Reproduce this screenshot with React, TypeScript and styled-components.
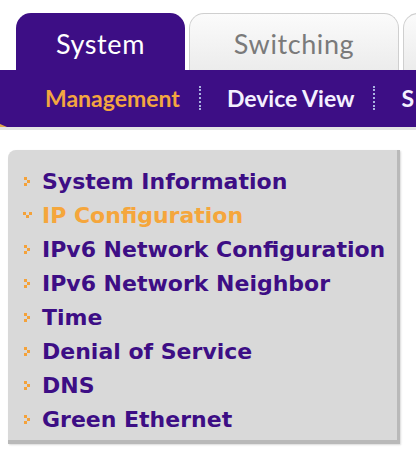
import { FC } from 'react';
import styled, { createGlobalStyle } from 'styled-components';

const Global = createGlobalStyle`
  html, body {
    margin: 0;
    padding: 0;
    background: #ffffff;
  }
`;

const Page = styled.div`
  width: 416px;
  height: 458px;
  overflow: hidden;
  background: #fff;
`;

const TabRow = styled.div`
  display: flex;
  gap: 4px;
  padding: 13px 0 0 16px;
  height: 57px;
  overflow: hidden;
`;

const Tab = styled.div<{ $active?: boolean; $w: number }>`
  flex: 0 0 ${p => p.$w}px;
  height: 57px;
  box-sizing: border-box;
  border-radius: 15px 15px 0 0;
  display: flex;
  justify-content: center;
  align-items: center;
  padding-top: 3px;
  font-family: "Lato", "DejaVu Sans", sans-serif;
  font-size: 27px;
  font-weight: 400;
  letter-spacing: 0.6px;
  color: ${p => (p.$active ? '#ffffff' : '#7a7a7a')};
  background: ${p => (p.$active ? '#3d0e85' : 'linear-gradient(#fbfbfb, #ececec)')};
  border: ${p => (p.$active ? 'none' : '1px solid #cfcfcf')};
  border-bottom: none;
`;

const Bar = styled.div`
  position: relative;
  height: 60px;
  background: #3d0e85;
  display: flex;
  align-items: center;
  padding-left: 45px;
  padding-bottom: 2px;
  box-sizing: border-box;
  white-space: nowrap;
  overflow: hidden;
  border-bottom: 3px solid #e4e4e4;
  &::after {
    content: '';
    position: absolute;
    left: 0;
    bottom: -3px;
    border-left: 7px solid #e0a84a;
    border-top: 3px solid transparent;
    border-bottom: 3px solid transparent;
  }
`;

const BarItem = styled.span<{ $active?: boolean }>`
  font-family: "Lato", "DejaVu Sans", sans-serif;
  font-size: 23px;
  font-weight: 700;
  color: ${p => (p.$active ? '#f3a640' : '#f4f0ff')};
`;

const Sep = styled.span`
  display: inline-block;
  width: 0;
  height: 24px;
  border-left: 2px dotted #a9b2e0;
  margin: 0 26px 0 19px;
`;

const Panel = styled.div`
  margin: 20px 0 0 8px;
  width: 392px;
  box-sizing: border-box;
  background: #d9d9d9;
  border-radius: 8px 0 0 0;
  padding: 14px 0 8px 15px;
  box-shadow: inset -3px -4px 0 #b9b9b9, 1px 1px 2px rgba(0, 0, 0, 0.15);
  display: flex;
  flex-direction: column;
`;

const Item = styled.div<{ $active?: boolean }>`
  display: flex;
  align-items: center;
  gap: 10px;
  height: 34px;
  font-family: "DejaVu Sans", Verdana, sans-serif;
  font-weight: 700;
  font-size: 22px;
  white-space: nowrap;
  color: ${p => (p.$active ? '#f5a63c' : '#3d0e85')};
`;

const Marker: FC<{ open?: boolean }> = ({ open }) => (
  <svg width="9" height="9" viewBox="0 0 9 9">
    {open ? (
      <g fill="#f4a23a">
        <rect x="0" y="1" width="3" height="3" />
        <rect x="6" y="1" width="3" height="3" />
        <rect x="3" y="4" width="3" height="3" />
      </g>
    ) : (
      <g fill="#f4a23a">
        <rect x="1" y="0" width="3" height="3" />
        <rect x="4" y="3" width="3" height="3" />
        <rect x="1" y="6" width="3" height="3" />
      </g>
    )}
  </svg>
);

const items = [
  'System Information',
  'IP Configuration',
  'IPv6 Network Configuration',
  'IPv6 Network Neighbor',
  'Time',
  'Denial of Service',
  'DNS',
  'Green Ethernet',
];

const App: FC = () => (
  <Page>
    <Global />
    <TabRow>
      <Tab $active $w={169}>System</Tab>
      <Tab $w={210}>Switching</Tab>
      <Tab $w={120} />
    </TabRow>
    <Bar>
      <BarItem $active>Management</BarItem>
      <Sep />
      <BarItem>Device View</BarItem>
      <Sep />
      <BarItem>S</BarItem>
    </Bar>
    <Panel>
      {items.map((t, i) => (
        <Item key={t} $active={i === 1}>
          <Marker open={i === 1} />
          {t}
        </Item>
      ))}
    </Panel>
  </Page>
);

export default App;
